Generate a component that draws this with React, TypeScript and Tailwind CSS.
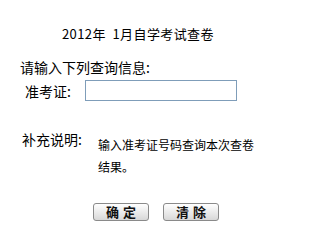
import React, { useState } from 'react';

const FONT = { fontFamily: '"Noto Sans CJK SC", "Liberation Sans", sans-serif' };

const App = () => {
  const [ticket, setTicket] = useState('');

  return (
    <div className="w-[297px] h-[234px] bg-white text-black overflow-hidden" style={FONT}>
      <div className="pt-[25px] pl-[62px] text-[13px] leading-[18px] tracking-[0.4px] whitespace-nowrap">
        2012年&nbsp;&nbsp;1月自学考试查卷
      </div>

      <div className="mt-[15px] pl-[20px] text-[14px] leading-[18px] whitespace-nowrap">
        请输入下列查询信息:
      </div>

      <div className="mt-[4px] flex items-center pl-[25px]">
        <span className="w-[60px] text-[14px] leading-[18px] whitespace-nowrap">准考证:</span>
        <input
          type="text"
          value={ticket}
          onChange={e => setTicket(e.target.value)}
          className="w-[152px] h-[21px] border border-[#7f9db9] bg-white px-1 text-[12px] outline-none"
        />
      </div>

      <div className="mt-[29px] flex pl-[22px]">
        <span className="w-[76px] text-[14px] leading-[18px] whitespace-nowrap">补充说明:</span>
        <div className="mt-[4px] text-[12px] leading-[22px] whitespace-nowrap">
          <div>输入准考证号码查询本次查卷</div>
          <div>结果。</div>
        </div>
      </div>

      <div className="mt-[25px] flex gap-[14px] pl-[93px]">
        <button
          type="button"
          className="w-[56px] h-[18px] rounded-[3px] border border-[#8a8a8a] bg-gradient-to-b from-white to-[#d8d8d8] text-[13px] leading-[16px] font-semibold tracking-[4px] pl-[4px] text-[#111]"
        >
          确定
        </button>
        <button
          type="button"
          onClick={() => setTicket('')}
          className="w-[56px] h-[18px] rounded-[3px] border border-[#8a8a8a] bg-gradient-to-b from-white to-[#d8d8d8] text-[13px] leading-[16px] font-semibold tracking-[4px] pl-[4px] text-[#111]"
        >
          清除
        </button>
      </div>
    </div>
  );
};

export default App;
